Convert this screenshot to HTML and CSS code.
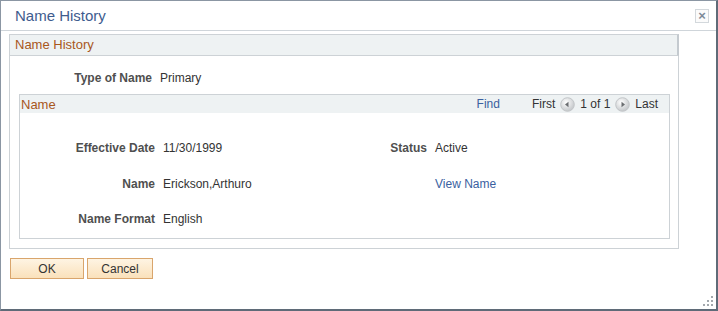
FILE: index.html
```html
<!DOCTYPE html>
<html lang="en">
<head>
    <meta charset="UTF-8">
    <title>Name History</title>
    <link rel="stylesheet" href="styles.css">
</head>
<body>

    <div class="dialog">
        <div class="titlebar">
            <span class="title">Name History</span>
            <span class="close">&#215;</span>
        </div>

        <div class="content">
            <div class="groupbox">
                <div class="gb-header">Name History</div>
                <div class="gb-body">
                    <div class="field-row">
                        <span class="label">Type of Name</span>
                        <span class="value">Primary</span>
                    </div>

                    <!-- grid Name -->
                    <div class="grid">
                        <div class="grid-header">
                            <span class="grid-title">Name</span>
                            <div class="nav">
                                <a class="link find">Find</a>
                                <span>First</span>
                                <svg class="arrow" width="15" height="15" viewBox="0 0 15 15">
                                    <defs>
                                        <radialGradient id="ball" cx="40%" cy="35%" r="65%">
                                            <stop offset="0" stop-color="#ffffff"/>
                                            <stop offset="1" stop-color="#c4c7ca"/>
                                        </radialGradient>
                                    </defs>
                                    <circle cx="7.5" cy="7.5" r="6.8" fill="url(#ball)" stroke="#c2c5c8"/>
                                    <path d="M5 7.5 L8.5 4.8 L8.5 10.2 Z" fill="#6a6d70"/>
                                </svg>
                                <span>1 of 1</span>
                                <svg class="arrow" width="15" height="15" viewBox="0 0 15 15">
                                    <circle cx="7.5" cy="7.5" r="6.8" fill="url(#ball)" stroke="#c2c5c8"/>
                                    <path d="M10 7.5 L6.5 4.8 L6.5 10.2 Z" fill="#6a6d70"/>
                                </svg>
                                <span>Last</span>
                            </div>
                        </div>
                        <div class="grid-body">
                            <span class="label">Effective Date</span>
                            <span class="value">11/30/1999</span>
                            <span class="label">Status</span>
                            <span class="value">Active</span>

                            <span class="label">Name</span>
                            <span class="value">Erickson,Arthuro</span>
                            <span></span>
                            <a class="link">View Name</a>

                            <span class="label">Name Format</span>
                            <span class="value">English</span>
                            <span></span>
                            <span></span>
                        </div>
                    </div>
                </div>
            </div>

            <div class="buttons">
                <button class="btn ok">OK</button>
                <button class="btn cancel">Cancel</button>
            </div>
        </div>

        <svg class="grip" width="12" height="12" viewBox="0 0 12 12">
            <rect x="9" y="1" width="2" height="2" fill="#a3a8ad"/>
            <rect x="5" y="5" width="2" height="2" fill="#a3a8ad"/>
            <rect x="9" y="5" width="2" height="2" fill="#a3a8ad"/>
            <rect x="1" y="9" width="2" height="2" fill="#a3a8ad"/>
            <rect x="5" y="9" width="2" height="2" fill="#a3a8ad"/>
            <rect x="9" y="9" width="2" height="2" fill="#a3a8ad"/>
        </svg>
    </div>

</body>
</html>
```

FILE: styles.css
```css
body {
    margin: 0;
    font-family: "Liberation Sans", Arial, sans-serif;
    font-size: 12px;
    color: #333;
    background: #fff;
}

.dialog {
    position: relative;
    box-sizing: border-box;
    width: 718px;
    height: 311px;
    border: 1px solid #8b96a3;
    border-right: 2px solid #5f6b78;
    border-bottom: 2px solid #5f6b78;
    background: #fff;
}

.titlebar {
    display: flex;
    align-items: center;
    height: 29px;
    border-bottom: 1px solid #cfd5da;
    padding-left: 14px;
    padding-right: 7px;
}

.title {
    flex: 1;
    font-size: 15px;
    color: #3e5c8e;
}

.close {
    width: 12px;
    height: 12px;
    border: 1px solid #d3d8dc;
    background: #fbfbfb;
    color: #7d8a98;
    font-size: 13px;
    font-weight: bold;
    line-height: 11px;
    text-align: center;
}

.content {
    padding: 3px 8px 0 8px;
}

/* group box */
.groupbox {
    width: 670px;
    box-sizing: border-box;
    border: 1px solid #cdd2d6;
    border-top: none;
}

.gb-header {
    height: 20px;
    line-height: 20px;
    margin-left: -1px;
    margin-right: -1px;
    background: #eef2f3;
    border: 1px solid #cdd2d6;
    border-right: 2px solid #c4cacf;
    padding-left: 5px;
    font-size: 13px;
    color: #a8571c;
}

.gb-body {
    padding: 14px 8px 9px 9px;
}

.label {
    font-weight: bold;
    color: #4f4f4f;
    text-align: right;
    line-height: 16px;
}

.value {
    line-height: 16px;
}

.field-row {
    display: flex;
    margin-left: -9px;
}

.field-row .label {
    width: 142px;
    margin-right: 8px;
}

/* grid */
.grid {
    margin-top: 8px;
    border: 1px solid #cdd2d6;
}

.grid-header {
    display: flex;
    align-items: center;
    height: 18px;
    background: #eef2f3;
    padding-left: 1px;
    padding-right: 11px;
}

.grid-title {
    flex: 1;
    font-size: 13px;
    color: #a8571c;
}

.nav {
    display: flex;
    align-items: center;
}

.nav span {
    color: #333;
}

.find {
    margin-right: 32px;
}

.arrow {
    margin: 0 5px;
}

.link {
    color: #3a5f9f;
    line-height: 16px;
    cursor: pointer;
}

.grid-body {
    display: grid;
    grid-template-columns: 135px 196px 60px 1fr;
    column-gap: 8px;
    row-gap: 19.5px;
    padding: 27px 0 11px 0;
}

/* buttons */
.buttons {
    display: flex;
    gap: 3px;
    margin-top: 9px;
    margin-left: 1px;
}

.btn {
    height: 21px;
    padding: 0;
    font-family: "Liberation Sans", Arial, sans-serif;
    font-size: 12px;
    color: #333;
    border: 1px solid #d9a56c;
    background: linear-gradient(#fef4e3, #fae1bb);
    cursor: pointer;
}

.btn.ok {
    width: 74px;
}

.btn.cancel {
    width: 66px;
}

.grip {
    position: absolute;
    right: 2px;
    bottom: 2px;
}
```
